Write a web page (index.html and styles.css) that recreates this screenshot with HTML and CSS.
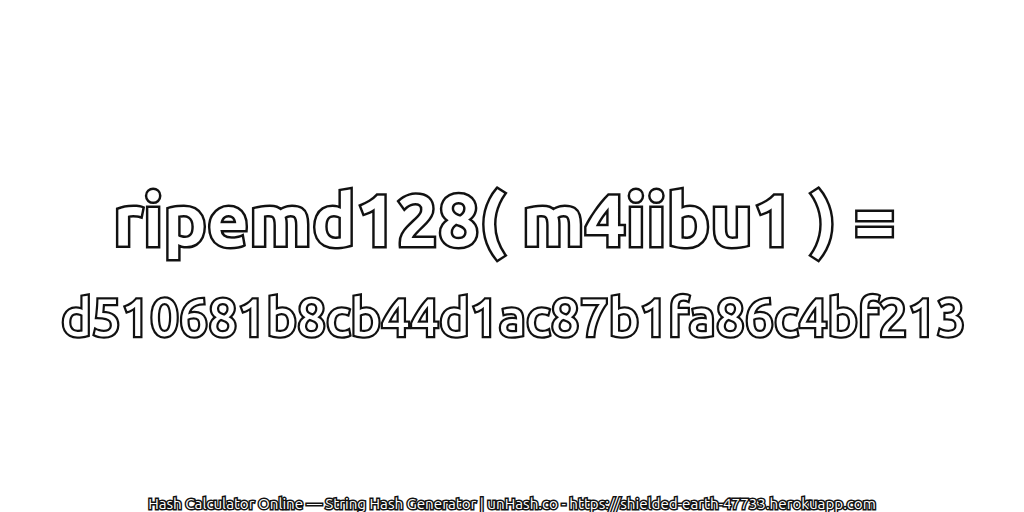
FILE: index.html
```html
<!DOCTYPE html>
<html lang="en">
<head>
<meta charset="utf-8">
<title>ripemd128</title>
<link rel="stylesheet" href="styles.css">
</head>
<body>
<main class="page">
<div class="center">
<h1 class="line line-big">ripemd128( m4iibu1 ) =</h1>
<h2 class="line line-hash">d510681b8cb44d1ac87b1fa86c4bf213</h2>
</div>
<footer class="foot">Hash Calculator Online — String Hash Generator | unHash.co - https://shielded-earth-47733.herokuapp.com</footer>
</main>
</body>
</html>
```
FILE: styles.css
```css
html,body{margin:0;padding:0;background:#fff;}
.page{width:1024px;height:512px;display:flex;flex-direction:column;overflow:hidden;font-family:"Ubuntu","DejaVu Sans",sans-serif;}
.center{flex:1;display:flex;flex-direction:column;align-items:center;justify-content:flex-start;padding-top:175px;}
.line{margin:0;color:#fff;white-space:nowrap;-webkit-text-stroke:5px #111;paint-order:stroke fill;}
.line-big{font-weight:700;font-size:73px;line-height:88px;padding-right:16px;}
.line-hash{font-weight:500;font-size:51.6px;line-height:88px;margin-top:10px;padding-left:3px;-webkit-text-stroke-width:4.5px;}
.foot{text-align:center;font-size:15.2px;line-height:16px;color:#fff;-webkit-text-stroke:3px #111;paint-order:stroke fill;white-space:nowrap;}
```
